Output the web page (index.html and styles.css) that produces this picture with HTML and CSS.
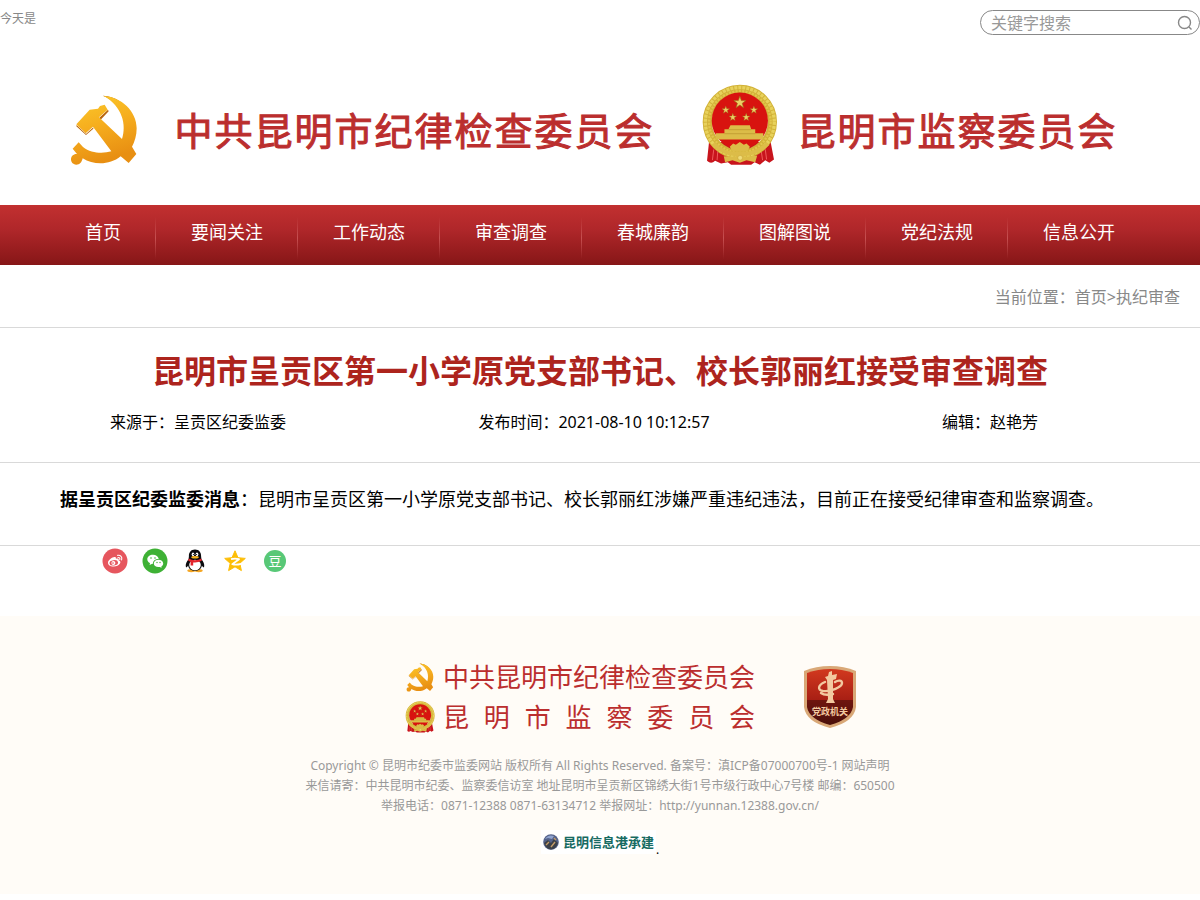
FILE: index.html
```
<!DOCTYPE html>
<html lang="zh-CN">
<head>
    <meta charset="UTF-8">
    <meta name="viewport" content="width=device-width, initial-scale=1.0">
    <title>昆明市呈贡区第一小学原党支部书记、校长郭丽红接受审查调查</title>
    <link rel="stylesheet" href="styles.css">
</head>
<body>
    <!-- shared emblems, used in the header and the footer -->
    <svg class="defs" width="0" height="0" aria-hidden="true">
        <defs>
            <linearGradient id="gold" x1="0" y1="0" x2="0.3" y2="1">
                <stop offset="0" stop-color="#fbcb2c"/>
                <stop offset="0.5" stop-color="#f6ae1e"/>
                <stop offset="1" stop-color="#e88f12"/>
            </linearGradient>
            <linearGradient id="badge-red" x1="0" y1="0" x2="0" y2="1">
                <stop offset="0" stop-color="#d2391f"/>
                <stop offset="0.55" stop-color="#a81f14"/>
                <stop offset="0.56" stop-color="#6e150f"/>
                <stop offset="1" stop-color="#4a0f0a"/>
            </linearGradient>
            <path id="star" d="M0-10 2.4-3.1 9.5-3.1 3.8 1.2 5.9 8.1 0 4-5.9 8.1-3.8 1.2-9.5-3.1-2.4-3.1z"/>
            <symbol id="party" viewBox="214 284 204 214">
                <path fill="#b8660f" d="M312 288C352 290 380 312 396 342L372 345C362 320 342 300 312 288zM302 354L328 330L330 335L306 360zM234 376L262 403L284 383L284 387L262 406L233 380z"/>
                <path fill="url(#gold)" d="M314 288C368 292 414 334 414 386C414 408 408 426 400 441L413 463L390 490L366 470C332 498 284 496 252 476C249 489 243 495 233 495C222 495 217 487 217 479C217 469 225 462 235 463L222 447L240 428L253 442C278 462 314 462 338 455L283 381L261 401L233 374L273 330L298 327L304 319L318 315L327 330L301 353L370 418C384 376 372 320 314 288z"/>
            </symbol>
            <symbol id="nation" viewBox="20 12 230 242">
                <path fill="#c8141c" d="M44 184L38 240Q50 252 62 240L80 248L100 244L110 252H170L180 244L196 252L212 238L224 246L238 236L228 184z"/>
                <path fill="none" stroke="#ee5a5a" stroke-width="3" d="M58 206L54 238M70 212L68 238M212 206L216 236M200 212L204 238"/>
                <circle cx="136" cy="124" r="97" fill="none" stroke="#d2b238" stroke-width="28"/>
                <circle cx="136" cy="124" r="103" fill="none" stroke="#e8d25c" stroke-width="10" stroke-dasharray="9 3"/>
                <circle cx="136" cy="124" r="92" fill="none" stroke="#e2c64c" stroke-width="7" stroke-dasharray="6 4"/>
                <circle cx="136" cy="120" r="84" fill="#d8130f"/>
                <g fill="#ecd066" stroke="#9b6b13">
                    <use href="#star" transform="translate(136 66) scale(1.9)"/>
                    <use href="#star" transform="translate(94 88) scale(1.2)"/>
                    <use href="#star" transform="translate(178 88) scale(1.2)"/>
                    <use href="#star" transform="translate(115 110) scale(1.2)"/>
                    <use href="#star" transform="translate(155 110) scale(1.2)"/>
                </g>
                <path fill="#dcbc48" d="M108 134H166L170 146H182V158H206V176H64V158H90V146H102z"/>
                <path fill="none" stroke="#b8922a" stroke-width="2" d="M102 147H170M90 159H182"/>
                <path fill="#d8130f" d="M80 180H190L180 192H92z"/>
                <path fill="none" stroke="#dcbc48" stroke-width="12" d="M56 190Q96 226 136 218Q178 226 220 188"/>
                <path fill="#dcbc48" d="M106 198L116 188 124 192 136 184 148 192 156 188 166 198 158 212H114z"/>
                <path fill="#dcbc48" d="M88 226L120 228 136 220 152 228 188 224 182 244 156 238 136 246 114 238 92 244z"/>
                <circle cx="137" cy="231" r="7" fill="#f0dc78" stroke="#b8922a"/>
            </symbol>
        </defs>
    </svg>

    <header>
        <div class="topbar">
            <span class="today">今天是</span>
            <form class="search">
                <input type="text" placeholder="关键字搜索" aria-label="关键字搜索">
                <button type="button" aria-label="搜索">
                    <svg width="16" height="16" viewBox="0 0 16 16" fill="none" stroke="#888" stroke-width="1.4"><circle cx="7.5" cy="7.5" r="6"/><path d="M12 12L14.5 14.5"/></svg>
                </button>
            </form>
        </div>
        <div class="brand">
            <svg class="brand-party"><use href="#party"/></svg>
            <span class="brand-name">中共昆明市纪律检查委员会</span>
            <svg class="brand-nation"><use href="#nation"/></svg>
            <span class="brand-name">昆明市监察委员会</span>
        </div>
    </header>

    <nav>
        <ul class="menu">
            <li><a href="#">首页</a></li>
            <li><a href="#">要闻关注</a></li>
            <li><a href="#">工作动态</a></li>
            <li><a href="#">审查调查</a></li>
            <li><a href="#">春城廉韵</a></li>
            <li><a href="#">图解图说</a></li>
            <li><a href="#">党纪法规</a></li>
            <li><a href="#">信息公开</a></li>
        </ul>
    </nav>

    <main>
        <div class="crumbs">当前位置：<a href="#">首页</a>&gt;<a href="#">执纪审查</a></div>
        <div class="heading">
            <h1>昆明市呈贡区第一小学原党支部书记、校长郭丽红接受审查调查</h1>
            <div class="meta">
                <span>来源于：呈贡区纪委监委</span>
                <span>发布时间：2021-08-10 10:12:57</span>
                <span>编辑：赵艳芳</span>
            </div>
        </div>
        <div class="content">
            <p><strong>据呈贡区纪委监委消息</strong>：昆明市呈贡区第一小学原党支部书记、校长郭丽红涉嫌严重违纪违法，目前正在接受纪律审查和监察调查。</p>
        </div>
        <div class="share">
            <a href="#" aria-label="微博">
                <svg viewBox="0 0 26 26"><circle cx="13" cy="13" r="12.5" fill="#e6565e"/><path fill="#fff" d="M11.5 9.3C13 8.6 14.3 9 13.9 10.7C15.8 10 17.2 10.6 16.6 12.2C18.2 12.6 18.9 14 18 15.6C16.8 17.7 14 18.6 11.3 18.5C8.4 18.4 6 16.9 6 14.7C6 12.6 9 10 11.5 9.3z"/><ellipse cx="11.8" cy="14.8" rx="4.3" ry="2.7" fill="#e6565e" transform="rotate(-8 12 15)"/><circle cx="11.4" cy="14.9" r="2" fill="#fff"/><circle cx="11" cy="15.1" r=".8" fill="#e6565e"/><path fill="none" stroke="#fff" stroke-width="1.1" stroke-linecap="round" d="M15.6 7.4C18.6 6.9 20.5 9.2 19.6 11.9M16 9.5C17.4 9.4 18.2 10.2 17.8 11.5"/></svg>
            </a>
            <a href="#" aria-label="微信">
                <svg viewBox="0 0 26 26"><circle cx="13" cy="13" r="12.5" fill="#3eb135"/><path fill="#fff" d="M11 6.8C14 6.8 16.4 8.6 16.7 11C13.4 10.9 10.8 13 11 15.7L10.3 15.7L7.6 17L8 15.1C6.4 14.2 5.3 12.8 5.3 11.2C5.3 8.7 7.8 6.8 11 6.8z"/><path fill="#fff" d="M16.5 11.7C19.2 11.7 21.2 13.4 21.2 15.4C21.2 16.7 20.4 17.7 19.3 18.4L19.6 19.8L17.7 18.9C14.4 19.5 11.8 17.8 11.8 15.4C11.8 13.3 13.9 11.7 16.5 11.7z"/><g fill="#3eb135"><circle cx="9" cy="10" r=".8"/><circle cx="13" cy="10" r=".8"/><circle cx="15" cy="14.5" r=".7"/><circle cx="18" cy="14.5" r=".7"/></g></svg>
            </a>
            <a href="#" aria-label="QQ">
                <svg viewBox="0 0 26 26"><ellipse cx="9.3" cy="22.6" rx="4" ry="1.6" fill="#f5a623"/><ellipse cx="16.7" cy="22.6" rx="4" ry="1.6" fill="#f5a623"/><path fill="#0b0b0e" d="M13 1.5C8.9 1.5 6.8 4.4 6.9 8.2L6.6 11.3C4.6 13.4 3.2 16.6 3.9 19C4.5 19.6 5.4 18.6 6.1 17.4C6.7 20.8 9.3 22.8 13 22.8S19.3 20.8 19.9 17.4C20.6 18.6 21.5 19.6 22.1 19C22.8 16.6 21.4 13.4 19.4 11.3L19.1 8.2C19.2 4.4 17.1 1.5 13 1.5z"/><ellipse cx="13" cy="17" rx="5.8" ry="5.2" fill="#fff"/><ellipse cx="11" cy="6.3" rx="1.3" ry="1.9" fill="#fff"/><ellipse cx="15" cy="6.3" rx="1.3" ry="1.9" fill="#fff"/><circle cx="11.4" cy="6.5" r=".6"/><circle cx="14.6" cy="6.5" r=".6"/><ellipse cx="13" cy="9.3" rx="3.8" ry="1.2" fill="#f5b220"/><path fill="#e3242b" d="M6.7 10.4Q13 14 19.3 10.4L19.8 12.7Q15.5 15 11.2 14.4V17.5H8.6V13.8L6.2 12.7z"/></svg>
            </a>
            <a href="#" aria-label="QQ空间">
                <svg viewBox="0 0 26 26"><path fill="#fdbe06" stroke="#fdbe06" stroke-linejoin="round" d="M13 2.8L16 9.7L23.3 10.4L17.8 15.3L19.4 22.6L13 18.8L6.6 22.6L8.2 15.3L2.7 10.4L10 9.7z"/><path fill="none" stroke="#fff" stroke-width="1.8" stroke-linejoin="round" d="M9 11.2Q13 10.2 17 11.2L10.3 16.2Q14 17.3 19 15.8"/></svg>
            </a>
            <a href="#" aria-label="豆瓣">
                <svg viewBox="0 0 26 26"><circle cx="13" cy="13" r="11" fill="#58c877"/><text class="douban" x="13" y="18" text-anchor="middle">豆</text></svg>
            </a>
        </div>
    </main>

    <footer>
        <div class="footer-brand">
            <div class="footer-names">
                <svg class="footer-party"><use href="#party"/></svg>
                <span>中共昆明市纪律检查委员会</span>
                <svg class="footer-nation"><use href="#nation"/></svg>
                <span class="spread">昆明市监察委员会</span>
            </div>
            <a href="#" aria-label="党政机关">
                <svg class="footer-badge" viewBox="0 0 54 64">
                    <path fill="#d9a877" d="M27 1Q41 1 53 6V42Q51 57 27 63Q3 57 1 42V6Q13 1 27 1z"/>
                    <path fill="url(#badge-red)" d="M27 4Q39 4 50 8V42Q48 54 27 60Q6 54 4 42V8Q15 4 27 4z"/>
                    <path fill="#f3c9a0" d="M24 15L22 12L25 11L26 7L29 6V10L34 9L33 14L30 15L30 34L32 38H23L25 34z"/>
                    <path fill="none" stroke="#f3c9a0" stroke-width="2.4" stroke-linecap="round" d="M22 17C15 20 14 25 20 26C28 27 39 22 39 18C39 15 35 15 32 17M18 28Q22 31 30 29"/>
                    <text class="badge-text" x="27" y="50" text-anchor="middle">党政机关</text>
                </svg>
            </a>
        </div>
        <div class="copyright">
            <p>Copyright © 昆明市纪委市监委网站 版权所有 All Rights Reserved. 备案号：滇ICP备07000700号-1 网站声明</p>
            <p>来信请寄：中共昆明市纪委、监察委信访室 地址昆明市呈贡新区锦绣大街1号市级行政中心7号楼 邮编：650500</p>
            <p>举报电话：0871-12388 0871-63134712 举报网址：http://yunnan.12388.gov.cn/</p>
        </div>
        <div class="builder">
            <a href="#">
                <svg width="16" height="16" viewBox="0 0 16 16"><circle cx="8" cy="8" r="7.8" fill="#54628a"/><path fill="#8fa3cf" d="M2 5Q5 0 11 2L9 5L5 4z"/><path fill="#3c4048" d="M1 9L5 6L8 9L11 5L15 9Q13 15 8 15.6Q3 15 1 9z"/><path fill="none" stroke="#c39c68" stroke-width="1.4" d="M3 11L6 8M8 13L12 8M11 4L13 6"/></svg>
                <span>昆明信息港承建</span>
            </a>
            <span>.</span>
        </div>
    </footer>
</body>
</html>
```
FILE: styles.css
```
* {
    box-sizing: border-box;
}
body {
    margin: 0;
    font-family: "Noto Sans", "Noto Sans CJK SC", sans-serif;
    font-size: 16px;
    line-height: 24px;
    color: #000;
    background-color: #fff;
}
a {
    color: inherit;
    text-decoration: none;
}
p, h1, ul {
    margin: 0;
    padding: 0;
}
.defs {
    display: block;
}

/* Header */
.topbar {
    display: flex;
    justify-content: space-between;
    align-items: flex-start;
    padding-top: 10px;
}
.today {
    font-size: 12px;
    line-height: 18px;
    color: #888;
}
.search {
    display: flex;
    align-items: center;
    width: 220px;
    height: 25px;
    padding: 0 6px 0 10px;
    border: 1px solid #888;
    border-radius: 13px;
}
.search input {
    flex: 1;
    min-width: 0;
    padding: 0;
    border: 0;
    outline: 0;
    background: none;
    font-family: inherit;
    font-size: 16px;
}
.search input::placeholder {
    color: #999;
}
.search button {
    display: flex;
    padding: 0;
    border: 0;
    background: none;
    cursor: pointer;
}
.brand {
    display: flex;
    align-items: center;
    justify-content: center;
    height: 170px;
    padding: 20px 12px 0 0;
}
.brand-name {
    font-size: 38px;
    line-height: 60px;
    letter-spacing: 2px;
    color: #bb2e2e;
    -webkit-text-stroke: 1px #bb2e2e;
    white-space: nowrap;
}
.brand-party {
    width: 68px;
    height: 72px;
    margin-right: 36px;
}
.brand-nation {
    width: 77px;
    height: 82px;
    margin: 0 20px 10px 46px;
}

/* Navigation */
nav {
    height: 60px;
    background: linear-gradient(#c23030, #b0272a 40%, #861617);
}
.menu {
    display: flex;
    justify-content: center;
    list-style: none;
}
.menu li {
    padding: 0 35px;
    height: 60px;
    line-height: 54px;
    font-size: 18px;
    color: #fff;
    white-space: nowrap;
    background: linear-gradient(rgba(220,110,110,0), rgba(220,110,110,0.6), rgba(220,110,110,0)) right 12px / 1px 42px no-repeat;
}
.menu li:last-child {
    background: none;
}

/* Article */
.crumbs {
    padding: 20px 20px 18px;
    text-align: right;
    color: #888;
    border-bottom: 1px solid #d9d9d9;
}
.heading {
    padding: 18px 0 28px;
    border-bottom: 1px solid #d9d9d9;
}
h1 {
    font-size: 32px;
    line-height: 50px;
    text-align: center;
    color: #ad241d;
}
.meta {
    display: flex;
    margin-top: 14px;
}
.meta span {
    width: 33%;
    text-align: center;
}
.content {
    padding: 18px 24px 28px;
    border-bottom: 1px solid #d9d9d9;
}
.content p {
    font-size: 18px;
    line-height: 36px;
    text-indent: 36px;
}
.share {
    display: flex;
    gap: 14px;
    padding: 2px 102px 42px;
}
.share svg {
    display: block;
    width: 26px;
    height: 26px;
}
.douban {
    font-size: 13px;
    fill: #fff;
}

/* Footer */
footer {
    padding: 41px 0 32px;
    background-color: #fffcf7;
}
.footer-brand {
    display: flex;
    justify-content: center;
    align-items: center;
    gap: 48px;
    padding-left: 62px;
}
.footer-names {
    display: grid;
    grid-template-columns: 30px auto;
    column-gap: 8px;
    align-items: center;
    justify-items: center;
    font-size: 26px;
    line-height: 40px;
    color: #bb2e2e;
}
.spread {
    justify-self: stretch;
    text-align: justify;
    text-align-last: justify;
}
.footer-party {
    width: 28px;
    height: 29px;
}
.footer-nation {
    width: 30px;
    height: 32px;
}
.footer-badge {
    display: block;
    width: 54px;
    height: 64px;
}
.badge-text {
    font-size: 9px;
    font-weight: 700;
    fill: #f3c9a0;
}
.copyright {
    padding-top: 19px;
    font-size: 12px;
    line-height: 20px;
    text-align: center;
    color: #999;
}
.builder {
    display: flex;
    justify-content: center;
    align-items: flex-start;
    margin-top: 14px;
    font-size: 12px;
}
.builder a {
    display: flex;
    align-items: center;
    gap: 4px;
    height: 24px;
    padding: 0 2px;
    background-color: #fff;
    font-size: 13px;
    font-weight: 700;
    color: #176b62;
}
.builder > span {
    padding-top: 8px;
}
```
